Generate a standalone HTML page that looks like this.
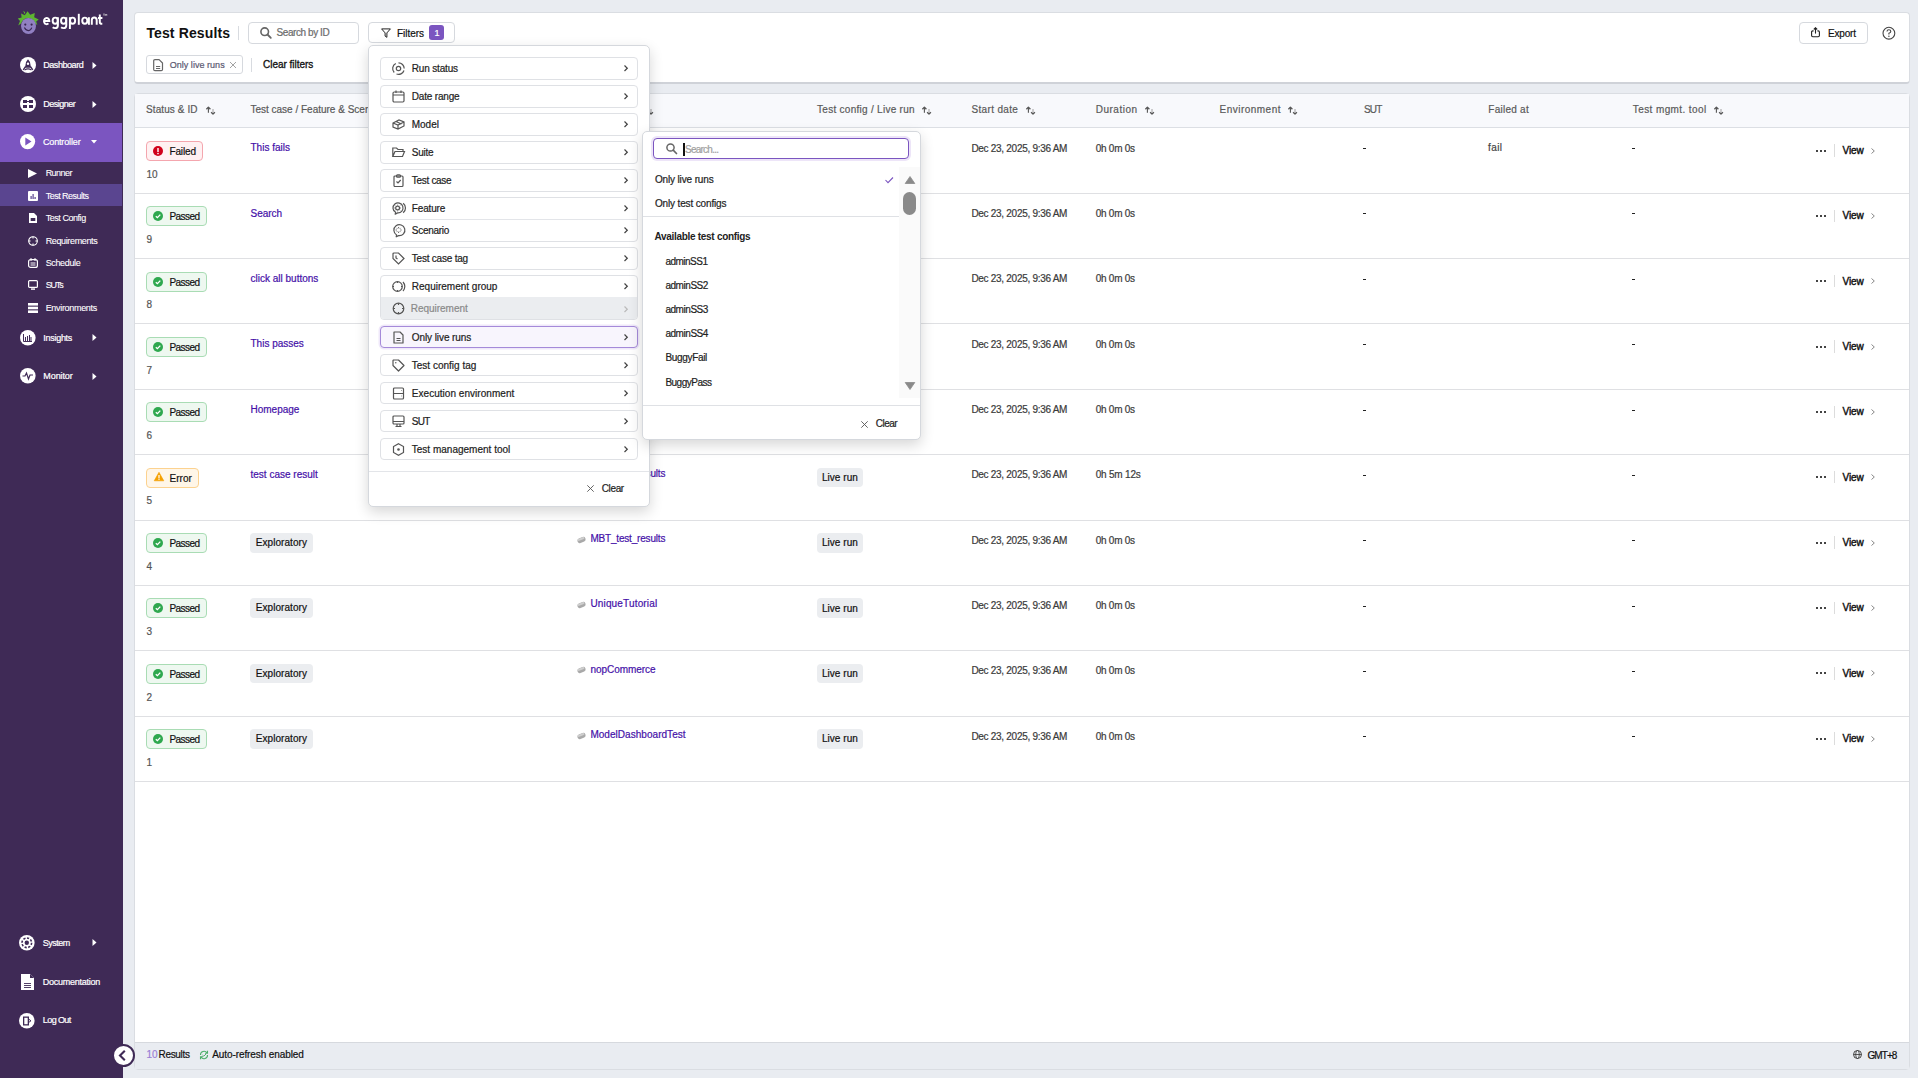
<!DOCTYPE html><html><head><meta charset="utf-8"><style>
html,body{margin:0;padding:0}
body{width:1918px;height:1078px;position:relative;overflow:hidden;background:#e9ecf1;font-family:"Liberation Sans",sans-serif}
.t{position:absolute;white-space:nowrap;line-height:1;-webkit-text-stroke:0.2px currentColor}
svg{overflow:visible}
</style></head><body>
<div style="position:absolute;left:0px;top:0px;width:123px;height:1078px;background:#3f2a56"></div>
<div style="position:absolute;left:0px;top:123px;width:122px;height:39px;background:#7b55c0"></div>
<div style="position:absolute;left:0px;top:184px;width:122px;height:22px;background:#5a4590"></div>
<svg style="position:absolute;left:14px;top:6px;" width="30" height="30" viewBox="0 0 30 30"><path d="M4.2 19.5 L6 15 L3.8 12.5 L7.6 11.6 L7.1 7.4 L10.8 9.2 L13.6 5.2 L16.2 8.8 L20.8 7.1 L20.2 11.2 L24.7 13.6 L22.2 15.6 L23.4 19.2 L21.4 17.4 Q19 12.2 14.2 12.1 Q9.2 12.2 7 17.4 Z" fill="#5db531"/>
<path d="M9.2 4.8 L11.2 6.2 L10.6 8.2 Z" fill="#5db531"/>
<ellipse cx="14.5" cy="20" rx="7.5" ry="8" fill="#9180c2"/>
<circle cx="11.3" cy="18.6" r="1.1" fill="#3a2653"/><circle cx="17.6" cy="18.6" r="1.1" fill="#3a2653"/>
<path d="M10.4 21.6 Q11.8 24.6 14.2 24.6 Q16.6 24.6 17.8 21.6" stroke="#3a2653" stroke-width="1.1" fill="none"/></svg>
<svg style="position:absolute;left:0px;top:0px;" width="110" height="34" viewBox="0 0 110 34"><g stroke="#fff" stroke-width="1.95" fill="none" stroke-linecap="butt">
<path d="M44 20.9 H49.3 A2.65 3.1 0 1 0 48.4 23.4"/>
<ellipse cx="55.2" cy="20.7" rx="2.55" ry="3.1"/><path d="M57.9 17.2 V25.2 Q57.9 28.1 55.1 28.1 Q53.6 28.1 52.7 27.3"/>
<ellipse cx="63.6" cy="20.7" rx="2.55" ry="3.1"/><path d="M66.3 17.2 V25.2 Q66.3 28.1 63.5 28.1 Q62 28.1 61.1 27.3"/>
<ellipse cx="72.6" cy="20.7" rx="2.55" ry="3.1"/><path d="M69.9 17.2 V29"/>
<path d="M78.8 13.8 V24.8"/>
<ellipse cx="84.8" cy="20.7" rx="2.55" ry="3.1"/><path d="M88.9 17.2 V24.8"/>
<path d="M91.8 24.8 V20.2 Q91.8 17.5 94.3 17.5 Q96.7 17.5 96.7 20.2 V24.8"/>
<path d="M99.8 14.6 V22.2 Q99.8 23.8 102.3 23.8 M98 18 H102.4"/>
</g>
<path d="M103 14 H105 M104 14 V16 M105.4 16 V14 L106.1 15.2 L106.8 14 V16" stroke="#ddd" stroke-width="0.5" fill="none"/></svg>
<svg style="position:absolute;left:20px;top:57px;" width="16" height="16" viewBox="0 0 16 16"><circle cx="8" cy="8" r="8" fill="#fff"/><path d="M8 2.2 Q10.6 4.6 10.6 8.4 L11 10.8 H5 L5.4 8.4 Q5.4 4.6 8 2.2 Z" fill="#3f2a56"/><circle cx="8" cy="6.8" r="1.2" fill="#fff"/><path d="M5.6 9.5 L3.2 12.8 M10.4 9.5 L12.8 12.8" stroke="#3f2a56" stroke-width="1.3"/><path d="M4.5 13 Q8 10.8 11.5 13" stroke="#3f2a56" stroke-width="1.1" fill="none"/></svg>
<div class="t" style="left:43.20px;top:60.88px;font-size:9px;color:#fff;letter-spacing:-0.439px;">Dashboard</div>
<svg style="position:absolute;left:92px;top:62px;" width="5" height="7" viewBox="0 0 5 7"><path d="M0.5 0 L4.5 3.5 L0.5 7 Z" fill="#fff"/></svg>
<svg style="position:absolute;left:20px;top:96px;" width="16" height="16" viewBox="0 0 16 16"><circle cx="8" cy="8" r="8" fill="#fff"/><rect x="3" y="4" width="4" height="3" fill="#3f2a56"/><rect x="9" y="4" width="4" height="3" fill="#3f2a56"/><rect x="3" y="9" width="4" height="3" fill="#3f2a56"/><rect x="9" y="9" width="4" height="3" fill="#3f2a56"/><rect x="6.5" y="5" width="3" height="1" fill="#3f2a56"/></svg>
<div class="t" style="left:43.20px;top:99.98px;font-size:9px;color:#fff;letter-spacing:-0.500px;">Designer</div>
<svg style="position:absolute;left:92px;top:101px;" width="5" height="7" viewBox="0 0 5 7"><path d="M0.5 0 L4.5 3.5 L0.5 7 Z" fill="#fff"/></svg>
<svg style="position:absolute;left:20px;top:134px;" width="15.2" height="15.2" viewBox="0 0 15.2 15.2"><circle cx="7.6" cy="7.6" r="7.6" fill="#fff"/><path d="M5.3 3.6 L11.5 7.6 L5.3 11.6 Z" fill="#7b55c0"/></svg>
<div class="t" style="left:42.90px;top:137.88px;font-size:9px;color:#fff;letter-spacing:-0.135px;">Controller</div>
<svg style="position:absolute;left:91px;top:140px;" width="6" height="4" viewBox="0 0 6 4"><path d="M0 0 L6 0 L3 3.5 Z" fill="#fff"/></svg>
<svg style="position:absolute;left:28px;top:169px;" width="9" height="9" viewBox="0 0 9 9"><path d="M0 0 L9 4.5 L0 9 Z" fill="#fff"/></svg>
<div class="t" style="left:45.70px;top:169.18px;font-size:9px;color:#fff;letter-spacing:-0.564px;-webkit-text-stroke:0.1px #fff">Runner</div>
<svg style="position:absolute;left:28px;top:191px;" width="10" height="10" viewBox="0 0 10 10"><rect x="0" y="0" width="10" height="10" rx="1" fill="#fff"/><rect x="2.5" y="5" width="1.2" height="3" fill="#5a4590"/><rect x="4.5" y="3" width="1.2" height="5" fill="#5a4590"/><rect x="6.5" y="6" width="1.2" height="2" fill="#5a4590"/></svg>
<div class="t" style="left:45.70px;top:192.18px;font-size:9px;color:#fff;letter-spacing:-0.519px;-webkit-text-stroke:0.1px #fff">Test Results</div>
<svg style="position:absolute;left:29px;top:213px;" width="8" height="10" viewBox="0 0 8 10"><path d="M0 0 L5 0 L8 3 L8 10 L0 10 Z" fill="#fff"/><rect x="1.7" y="5" width="4.6" height="3" fill="#3f2a56"/></svg>
<div class="t" style="left:45.70px;top:214.48px;font-size:9px;color:#fff;letter-spacing:-0.455px;-webkit-text-stroke:0.1px #fff">Test Config</div>
<svg style="position:absolute;left:28px;top:236px;" width="10" height="10" viewBox="0 0 10 10"><circle cx="5" cy="5" r="4.3" stroke="#fff" stroke-width="1.1" fill="none"/><path d="M5 0.5 V2.6 M5 7.4 V9.5 M0.5 5 H2.6 M7.4 5 H9.5" stroke="#fff" stroke-width="1.1"/></svg>
<div class="t" style="left:45.70px;top:236.88px;font-size:9px;color:#fff;letter-spacing:-0.366px;-webkit-text-stroke:0.1px #fff">Requirements</div>
<svg style="position:absolute;left:28px;top:258px;" width="10" height="10" viewBox="0 0 10 10"><rect x="0.6" y="1.6" width="8.8" height="7.8" rx="2" stroke="#fff" stroke-width="1.2" fill="none"/><path d="M3 0 V3 M7 0 V3 M2.5 5 H7.5 M2.5 7 H7.5" stroke="#fff" stroke-width="1"/></svg>
<div class="t" style="left:45.70px;top:259.18px;font-size:9px;color:#fff;letter-spacing:-0.361px;-webkit-text-stroke:0.1px #fff">Schedule</div>
<svg style="position:absolute;left:28px;top:280px;" width="10" height="10" viewBox="0 0 10 10"><rect x="0.6" y="0.6" width="8.8" height="6.8" rx="1" stroke="#fff" stroke-width="1.2" fill="none"/><rect x="3" y="8.4" width="4" height="1.4" fill="#fff"/></svg>
<div class="t" style="left:45.70px;top:281.48px;font-size:9px;color:#fff;letter-spacing:-1.170px;-webkit-text-stroke:0.1px #fff">SUTs</div>
<svg style="position:absolute;left:28px;top:303px;" width="10" height="10" viewBox="0 0 10 10"><rect x="0" y="0" width="10" height="2.6" fill="#fff"/><rect x="0" y="3.7" width="10" height="2.6" fill="#fff"/><rect x="0" y="7.4" width="10" height="2.6" fill="#fff"/></svg>
<div class="t" style="left:45.70px;top:304.18px;font-size:9px;color:#fff;letter-spacing:-0.321px;-webkit-text-stroke:0.1px #fff">Environments</div>
<svg style="position:absolute;left:20px;top:330px;" width="15.6" height="15.6" viewBox="0 0 15.6 15.6"><circle cx="7.8" cy="7.8" r="7.8" fill="#fff"/><path d="M3.5 4 V11.5 H12 M5.5 11 V7 M7.5 11 V6 M9.5 11 V5 M11 11 V7" stroke="#3f2a56" stroke-width="1" fill="none"/></svg>
<div class="t" style="left:43.30px;top:333.68px;font-size:9px;color:#fff;letter-spacing:-0.286px;">Insights</div>
<svg style="position:absolute;left:92px;top:334px;" width="5" height="7" viewBox="0 0 5 7"><path d="M0.5 0 L4.5 3.5 L0.5 7 Z" fill="#fff"/></svg>
<svg style="position:absolute;left:20px;top:368px;" width="15.6" height="15.6" viewBox="0 0 15.6 15.6"><circle cx="7.8" cy="7.8" r="7.8" fill="#fff"/><path d="M2.5 8 H5 L6.5 5 L8.5 11 L10 7 H13" stroke="#3f2a56" stroke-width="1.2" fill="none"/></svg>
<div class="t" style="left:43.30px;top:372.18px;font-size:9px;color:#fff;letter-spacing:-0.086px;">Monitor</div>
<svg style="position:absolute;left:92px;top:373px;" width="5" height="7" viewBox="0 0 5 7"><path d="M0.5 0 L4.5 3.5 L0.5 7 Z" fill="#fff"/></svg>
<svg style="position:absolute;left:19px;top:935px;" width="15.6" height="15.6" viewBox="0 0 15.6 15.6"><circle cx="7.8" cy="7.8" r="7.8" fill="#fff"/><circle cx="7.8" cy="7.8" r="2.2" fill="#3f2a56"/><circle cx="7.8" cy="7.8" r="4.8" stroke="#3f2a56" stroke-width="1.6" fill="none" stroke-dasharray="2.2 1.5"/></svg>
<div class="t" style="left:42.80px;top:938.98px;font-size:9px;color:#fff;letter-spacing:-0.503px;">System</div>
<svg style="position:absolute;left:92px;top:939px;" width="5" height="7" viewBox="0 0 5 7"><path d="M0.5 0 L4.5 3.5 L0.5 7 Z" fill="#fff"/></svg>
<svg style="position:absolute;left:21px;top:974px;" width="13" height="16" viewBox="0 0 13 16"><path d="M0 0 L9 0 L13 4 L13 16 L0 16 Z" fill="#fff"/><path d="M9 0 V4 H13" fill="#3f2a56"/><path d="M3 9.5 H10 M3 11.5 H10 M3 13.5 H10" stroke="#3f2a56" stroke-width="0.9"/></svg>
<div class="t" style="left:42.80px;top:978.18px;font-size:9px;color:#fff;letter-spacing:-0.260px;">Documentation</div>
<svg style="position:absolute;left:19px;top:1013px;" width="15.6" height="15.6" viewBox="0 0 15.6 15.6"><circle cx="7.8" cy="7.8" r="7.8" fill="#fff"/><rect x="4" y="3.5" width="6" height="9" fill="#3f2a56"/><rect x="5.3" y="4.8" width="3.4" height="6.4" fill="#fff"/><path d="M9.5 6 L12 7.8 L9.5 9.6" stroke="#3f2a56" stroke-width="1" fill="none"/></svg>
<div class="t" style="left:42.80px;top:1016.48px;font-size:9px;color:#fff;letter-spacing:-0.590px;">Log Out</div>
<div style="position:absolute;left:134px;top:12px;width:1776px;height:71.5px;background:#fff;border:1px solid #dadde2;border-bottom:2px solid #cfd2d8;border-radius:4px;box-sizing:border-box"></div>
<div class="t" style="left:146.40px;top:25.95px;font-size:14px;color:#111;font-weight:bold;-webkit-text-stroke:0;letter-spacing:0.129px;">Test Results</div>
<div style="position:absolute;left:238px;top:26px;width:1px;height:14px;background:#d8dbe0"></div>
<div style="position:absolute;left:247.5px;top:22.4px;width:111.10000000000002px;height:21.200000000000003px;border:1px solid #d6d9de;border-radius:4px;box-sizing:border-box;background:#fff"></div>
<svg style="position:absolute;left:260px;top:27px;" width="12" height="12" viewBox="0 0 12 12"><circle cx="4.7" cy="4.7" r="3.8" stroke="#666" stroke-width="1.6" fill="none"/><path d="M7.5 7.5 L10.8 10.8" stroke="#666" stroke-width="1.8" stroke-linecap="round"/></svg>
<div class="t" style="left:276.60px;top:28.14px;font-size:10px;color:#6b6b6b;letter-spacing:-0.436px;">Search by ID</div>
<div style="position:absolute;left:368.3px;top:22.4px;width:87.19999999999999px;height:20.9px;border:1px solid #d6d9de;border-radius:4px;box-sizing:border-box;background:#fff"></div>
<svg style="position:absolute;left:381px;top:28px;" width="10" height="10" viewBox="0 0 10 10"><path d="M0.6 0.9 H9.4 L5.9 4.9 V9.3 L4.1 8.1 V4.9 Z" stroke="#222" stroke-width="1" fill="none" stroke-linejoin="miter"/></svg>
<div class="t" style="left:397.00px;top:29.14px;font-size:10px;color:#111;letter-spacing:-0.033px;">Filters</div>
<div style="position:absolute;left:429px;top:25px;width:15px;height:15px;background:#7b55c0;border-radius:3px"></div>
<div class="t" style="left:434.50px;top:29.18px;font-size:9px;color:#fff;">1</div>
<div style="position:absolute;left:146.3px;top:55px;width:96.29999999999998px;height:18.5px;border:1px solid #d6d9de;border-radius:3px;box-sizing:border-box;background:#fff"></div>
<svg style="position:absolute;left:153px;top:59px;" width="11" height="13" viewBox="0 0 11 13"><path d="M0.7 1.8 Q0.7 0.6 1.9 0.6 H6.1 L9.5 4 V10.4 Q9.5 11.6 8.3 11.6 H1.9 Q0.7 11.6 0.7 10.4 Z" stroke="#666" stroke-width="1.2" fill="none" stroke-linejoin="round"/><path d="M3 7.5 H7.2 M3 9.5 H7.2" stroke="#666" stroke-width="1"/></svg>
<div class="t" style="left:169.70px;top:61.18px;font-size:9px;color:#5a5870;letter-spacing:0.035px;">Only live runs</div>
<svg style="position:absolute;left:230px;top:62px;" width="6" height="6" viewBox="0 0 6 6"><path d="M0 0 L6 6 M6 0 L0 6" stroke="#999" stroke-width="0.9"/></svg>
<div style="position:absolute;left:251px;top:58px;width:1px;height:14px;background:#d8dbe0"></div>
<div class="t" style="left:263.00px;top:60.13px;font-size:10px;color:#111;letter-spacing:-0.029px;-webkit-text-stroke:0.32px #111">Clear filters</div>
<div style="position:absolute;left:1798.5px;top:22.3px;width:69.09999999999991px;height:21.3px;border:1px solid #d6d9de;border-radius:4px;box-sizing:border-box;background:#fff"></div>
<svg style="position:absolute;left:1811px;top:27px;" width="10" height="11" viewBox="0 0 10 11"><path d="M2.6 3.9 H1.8 Q0.6 3.9 0.6 5.1 V8.6 Q0.6 9.8 1.8 9.8 H7.2 Q8.4 9.8 8.4 8.6 V5.1 Q8.4 3.9 7.2 3.9 H6.4" stroke="#222" stroke-width="1.1" fill="none"/><path d="M4.5 6.6 V0.9" stroke="#222" stroke-width="1.1"/><path d="M2.8 2.5 L4.5 0.8 L6.2 2.5" stroke="#222" stroke-width="1.1" fill="none"/></svg>
<div class="t" style="left:1828.00px;top:29.14px;font-size:10px;color:#111;letter-spacing:-0.180px;">Export</div>
<svg style="position:absolute;left:1882px;top:26px;" width="14" height="14" viewBox="0 0 14 14"><circle cx="6.9" cy="7.2" r="5.9" stroke="#444" stroke-width="1.1" fill="none"/><path d="M5 5.6 Q5 3.7 6.9 3.7 Q8.8 3.7 8.8 5.4 Q8.8 6.5 6.9 7.3 V8.5" stroke="#444" stroke-width="1.1" fill="none"/><circle cx="6.9" cy="10.2" r="0.7" fill="#444"/></svg>
<div style="position:absolute;left:134px;top:93px;width:1776px;height:977px;background:#fff;border:1px solid #dadde2;border-radius:4px;box-sizing:border-box;overflow:hidden"></div>
<div style="position:absolute;left:135px;top:94px;width:1774px;height:33px;background:#f8f9fc"></div>
<div style="position:absolute;left:135px;top:127px;width:1774px;height:1px;background:#dcdfe4"></div>
<div style="position:absolute;left:135px;top:1042px;width:1774px;height:27px;background:#e9ecf1;border-top:1px solid #d6d9de;box-sizing:border-box"></div>
<div class="t" style="left:146.40px;top:1049.93px;font-size:10px;color:#9a7fd6;">10</div>
<div class="t" style="left:158.50px;top:1049.93px;font-size:10px;color:#111;letter-spacing:-0.308px;">Results</div>
<svg style="position:absolute;left:199px;top:1050px;" width="10" height="10" viewBox="0 0 10 10"><path d="M1.5 5 A3.5 3.5 0 0 1 8 3 M8.5 5 A3.5 3.5 0 0 1 2 7" stroke="#4caf6a" stroke-width="1.1" fill="none"/><path d="M8.5 0.8 V3.3 H6" stroke="#4caf6a" stroke-width="1.1" fill="none"/><path d="M1.5 9.2 V6.7 H4" stroke="#4caf6a" stroke-width="1.1" fill="none"/><path d="M3.5 5 L4.8 6.2 L7 4" stroke="#4caf6a" stroke-width="1" fill="none"/></svg>
<div class="t" style="left:212.30px;top:1049.93px;font-size:10px;color:#111;letter-spacing:-0.100px;">Auto-refresh enabled</div>
<svg style="position:absolute;left:1853px;top:1050px;" width="9" height="9" viewBox="0 0 9 9"><circle cx="4.5" cy="4.5" r="4" stroke="#333" stroke-width="0.9" fill="none"/><ellipse cx="4.5" cy="4.5" rx="1.8" ry="4" stroke="#333" stroke-width="0.8" fill="none"/><path d="M0.5 4.5 H8.5" stroke="#333" stroke-width="0.8"/></svg>
<div class="t" style="left:1867.40px;top:1051.34px;font-size:10px;color:#111;letter-spacing:-0.900px;">GMT+8</div>
<div class="t" style="left:146.00px;top:105.43px;font-size:10px;color:#5a5a5a;letter-spacing:0.090px;">Status &amp; ID</div>
<svg style="position:absolute;left:206px;top:106px;" width="10" height="9" viewBox="0 0 10 9"><path d="M2.4 1.6 V6.8" stroke="#555" stroke-width="1.1"/><path d="M0.4 3.2 L2.4 1.1 L4.4 3.2" stroke="#555" stroke-width="1.3" fill="none" stroke-linejoin="round"/><path d="M7 2.9 V7.4" stroke="#a8a8a8" stroke-width="1.1"/><path d="M5.1 6.3 L7 8.1 L8.9 6.3" stroke="#555" stroke-width="1.3" fill="none" stroke-linejoin="round"/></svg>
<div class="t" style="left:250.40px;top:105.43px;font-size:10px;color:#5a5a5a;">Test case / Feature &amp; Scenario</div>
<svg style="position:absolute;left:644px;top:106px;" width="10" height="9" viewBox="0 0 10 9"><path d="M2.4 1.6 V6.8" stroke="#555" stroke-width="1.1"/><path d="M0.4 3.2 L2.4 1.1 L4.4 3.2" stroke="#555" stroke-width="1.3" fill="none" stroke-linejoin="round"/><path d="M7 2.9 V7.4" stroke="#a8a8a8" stroke-width="1.1"/><path d="M5.1 6.3 L7 8.1 L8.9 6.3" stroke="#555" stroke-width="1.3" fill="none" stroke-linejoin="round"/></svg>
<div class="t" style="left:817.10px;top:105.43px;font-size:10px;color:#5a5a5a;letter-spacing:0.276px;">Test config / Live run</div>
<svg style="position:absolute;left:922px;top:106px;" width="10" height="9" viewBox="0 0 10 9"><path d="M2.4 1.6 V6.8" stroke="#555" stroke-width="1.1"/><path d="M0.4 3.2 L2.4 1.1 L4.4 3.2" stroke="#555" stroke-width="1.3" fill="none" stroke-linejoin="round"/><path d="M7 2.9 V7.4" stroke="#a8a8a8" stroke-width="1.1"/><path d="M5.1 6.3 L7 8.1 L8.9 6.3" stroke="#555" stroke-width="1.3" fill="none" stroke-linejoin="round"/></svg>
<div class="t" style="left:971.40px;top:105.43px;font-size:10px;color:#5a5a5a;letter-spacing:0.350px;">Start date</div>
<svg style="position:absolute;left:1026px;top:106px;" width="10" height="9" viewBox="0 0 10 9"><path d="M2.4 1.6 V6.8" stroke="#555" stroke-width="1.1"/><path d="M0.4 3.2 L2.4 1.1 L4.4 3.2" stroke="#555" stroke-width="1.3" fill="none" stroke-linejoin="round"/><path d="M7 2.9 V7.4" stroke="#a8a8a8" stroke-width="1.1"/><path d="M5.1 6.3 L7 8.1 L8.9 6.3" stroke="#555" stroke-width="1.3" fill="none" stroke-linejoin="round"/></svg>
<div class="t" style="left:1095.70px;top:105.43px;font-size:10px;color:#5a5a5a;letter-spacing:0.514px;">Duration</div>
<svg style="position:absolute;left:1145px;top:106px;" width="10" height="9" viewBox="0 0 10 9"><path d="M2.4 1.6 V6.8" stroke="#555" stroke-width="1.1"/><path d="M0.4 3.2 L2.4 1.1 L4.4 3.2" stroke="#555" stroke-width="1.3" fill="none" stroke-linejoin="round"/><path d="M7 2.9 V7.4" stroke="#a8a8a8" stroke-width="1.1"/><path d="M5.1 6.3 L7 8.1 L8.9 6.3" stroke="#555" stroke-width="1.3" fill="none" stroke-linejoin="round"/></svg>
<div class="t" style="left:1219.50px;top:105.43px;font-size:10px;color:#5a5a5a;letter-spacing:0.485px;">Environment</div>
<svg style="position:absolute;left:1288px;top:106px;" width="10" height="9" viewBox="0 0 10 9"><path d="M2.4 1.6 V6.8" stroke="#555" stroke-width="1.1"/><path d="M0.4 3.2 L2.4 1.1 L4.4 3.2" stroke="#555" stroke-width="1.3" fill="none" stroke-linejoin="round"/><path d="M7 2.9 V7.4" stroke="#a8a8a8" stroke-width="1.1"/><path d="M5.1 6.3 L7 8.1 L8.9 6.3" stroke="#555" stroke-width="1.3" fill="none" stroke-linejoin="round"/></svg>
<div class="t" style="left:1364.00px;top:105.43px;font-size:10px;color:#5a5a5a;letter-spacing:-0.850px;">SUT</div>
<div class="t" style="left:1488.30px;top:105.43px;font-size:10px;color:#5a5a5a;letter-spacing:0.256px;">Failed at</div>
<div class="t" style="left:1632.80px;top:105.43px;font-size:10px;color:#5a5a5a;letter-spacing:0.400px;">Test mgmt. tool</div>
<svg style="position:absolute;left:1714px;top:106px;" width="10" height="9" viewBox="0 0 10 9"><path d="M2.4 1.6 V6.8" stroke="#555" stroke-width="1.1"/><path d="M0.4 3.2 L2.4 1.1 L4.4 3.2" stroke="#555" stroke-width="1.3" fill="none" stroke-linejoin="round"/><path d="M7 2.9 V7.4" stroke="#a8a8a8" stroke-width="1.1"/><path d="M5.1 6.3 L7 8.1 L8.9 6.3" stroke="#555" stroke-width="1.3" fill="none" stroke-linejoin="round"/></svg>
<div style="position:absolute;left:135px;top:193px;width:1774px;height:1px;background:#dfe0e3"></div>
<div style="position:absolute;left:146px;top:140.8px;width:56.80000000000001px;height:20.0px;background:#fff1f2;border:1px solid #f4a6ae;border-radius:4px;box-sizing:border-box"></div>
<svg style="position:absolute;left:153px;top:146px;" width="10" height="10" viewBox="0 0 10 10"><circle cx="5" cy="5" r="5" fill="#d0021b"/><rect x="4.3" y="2" width="1.4" height="4" fill="#fff"/><circle cx="5" cy="7.6" r="0.8" fill="#fff"/></svg>
<div class="t" style="left:169.50px;top:146.94px;font-size:10px;color:#111;letter-spacing:-0.150px;">Failed</div>
<div class="t" style="left:146.50px;top:169.73px;font-size:10px;color:#555;">10</div>
<div class="t" style="left:250.50px;top:143.44px;font-size:10px;color:#4510a8;">This fails</div>
<div class="t" style="left:971.40px;top:143.53px;font-size:10px;color:#3a3a3a;letter-spacing:-0.287px;">Dec 23, 2025, 9:36 AM</div>
<div class="t" style="left:1095.70px;top:143.53px;font-size:10px;color:#3a3a3a;letter-spacing:-0.250px;">0h 0m 0s</div>
<div style="position:absolute;left:1363px;top:148px;width:3px;height:1px;background:#222"></div>
<div class="t" style="left:1488.00px;top:143.03px;font-size:10px;color:#444;letter-spacing:0.400px;">fail</div>
<div style="position:absolute;left:1632px;top:148px;width:3px;height:1px;background:#222"></div>
<div style="position:absolute;left:1815.8px;top:149.5px;width:2.1000000000001364px;height:2.0px;background:#444"></div>
<div style="position:absolute;left:1820.1px;top:149.5px;width:2.1000000000001364px;height:2.0px;background:#444"></div>
<div style="position:absolute;left:1824.3999999999999px;top:149.5px;width:2.1000000000001364px;height:2.0px;background:#444"></div>
<div style="position:absolute;left:1834px;top:144.2px;width:1px;height:12.5px;background:#dcdcdc"></div>
<div class="t" style="left:1842.50px;top:145.94px;font-size:10px;color:#111;letter-spacing:-0.067px;-webkit-text-stroke:0.4px #111">View</div>
<svg style="position:absolute;left:1871px;top:148px;" width="4" height="6" viewBox="0 0 4 6"><path d="M0.5 0.5 L3.3 3 L0.5 5.5" stroke="#888" stroke-width="1" fill="none"/></svg>
<div style="position:absolute;left:135px;top:258px;width:1774px;height:1px;background:#dfe0e3"></div>
<div style="position:absolute;left:146px;top:206.15px;width:60.80000000000001px;height:20.0px;background:#eef8f0;border:1px solid #a9dcb4;border-radius:4px;box-sizing:border-box"></div>
<svg style="position:absolute;left:153px;top:211px;" width="10" height="10" viewBox="0 0 10 10"><circle cx="5" cy="5" r="5" fill="#2fa84f"/><path d="M2.8 5.2 L4.4 6.7 L7.3 3.6" stroke="#fff" stroke-width="1.3" fill="none"/></svg>
<div class="t" style="left:169.50px;top:212.28px;font-size:10px;color:#111;letter-spacing:-0.570px;">Passed</div>
<div class="t" style="left:146.50px;top:235.08px;font-size:10px;color:#555;">9</div>
<div class="t" style="left:250.50px;top:208.78px;font-size:10px;color:#4510a8;">Search</div>
<div class="t" style="left:971.40px;top:208.88px;font-size:10px;color:#3a3a3a;letter-spacing:-0.287px;">Dec 23, 2025, 9:36 AM</div>
<div class="t" style="left:1095.70px;top:208.88px;font-size:10px;color:#3a3a3a;letter-spacing:-0.250px;">0h 0m 0s</div>
<div style="position:absolute;left:1363px;top:213px;width:3px;height:1px;background:#222"></div>
<div style="position:absolute;left:1632px;top:213px;width:3px;height:1px;background:#222"></div>
<div style="position:absolute;left:1815.8px;top:214.85px;width:2.1000000000001364px;height:2.0px;background:#444"></div>
<div style="position:absolute;left:1820.1px;top:214.85px;width:2.1000000000001364px;height:2.0px;background:#444"></div>
<div style="position:absolute;left:1824.3999999999999px;top:214.85px;width:2.1000000000001364px;height:2.0px;background:#444"></div>
<div style="position:absolute;left:1834px;top:209.54999999999998px;width:1px;height:12.5px;background:#dcdcdc"></div>
<div class="t" style="left:1842.50px;top:211.28px;font-size:10px;color:#111;letter-spacing:-0.067px;-webkit-text-stroke:0.4px #111">View</div>
<svg style="position:absolute;left:1871px;top:213px;" width="4" height="6" viewBox="0 0 4 6"><path d="M0.5 0.5 L3.3 3 L0.5 5.5" stroke="#888" stroke-width="1" fill="none"/></svg>
<div style="position:absolute;left:135px;top:323px;width:1774px;height:1px;background:#dfe0e3"></div>
<div style="position:absolute;left:146px;top:271.5px;width:60.80000000000001px;height:20.0px;background:#eef8f0;border:1px solid #a9dcb4;border-radius:4px;box-sizing:border-box"></div>
<svg style="position:absolute;left:153px;top:277px;" width="10" height="10" viewBox="0 0 10 10"><circle cx="5" cy="5" r="5" fill="#2fa84f"/><path d="M2.8 5.2 L4.4 6.7 L7.3 3.6" stroke="#fff" stroke-width="1.3" fill="none"/></svg>
<div class="t" style="left:169.50px;top:277.64px;font-size:10px;color:#111;letter-spacing:-0.570px;">Passed</div>
<div class="t" style="left:146.50px;top:300.44px;font-size:10px;color:#555;">8</div>
<div class="t" style="left:250.50px;top:274.14px;font-size:10px;color:#4510a8;">click all buttons</div>
<div class="t" style="left:971.40px;top:274.24px;font-size:10px;color:#3a3a3a;letter-spacing:-0.287px;">Dec 23, 2025, 9:36 AM</div>
<div class="t" style="left:1095.70px;top:274.24px;font-size:10px;color:#3a3a3a;letter-spacing:-0.250px;">0h 0m 0s</div>
<div style="position:absolute;left:1363px;top:279px;width:3px;height:1px;background:#222"></div>
<div style="position:absolute;left:1632px;top:279px;width:3px;height:1px;background:#222"></div>
<div style="position:absolute;left:1815.8px;top:280.2px;width:2.1000000000001364px;height:2.0px;background:#444"></div>
<div style="position:absolute;left:1820.1px;top:280.2px;width:2.1000000000001364px;height:2.0px;background:#444"></div>
<div style="position:absolute;left:1824.3999999999999px;top:280.2px;width:2.1000000000001364px;height:2.0px;background:#444"></div>
<div style="position:absolute;left:1834px;top:274.9px;width:1px;height:12.5px;background:#dcdcdc"></div>
<div class="t" style="left:1842.50px;top:276.64px;font-size:10px;color:#111;letter-spacing:-0.067px;-webkit-text-stroke:0.4px #111">View</div>
<svg style="position:absolute;left:1871px;top:278px;" width="4" height="6" viewBox="0 0 4 6"><path d="M0.5 0.5 L3.3 3 L0.5 5.5" stroke="#888" stroke-width="1" fill="none"/></svg>
<div style="position:absolute;left:135px;top:389px;width:1774px;height:1px;background:#dfe0e3"></div>
<div style="position:absolute;left:146px;top:336.84999999999997px;width:60.80000000000001px;height:20.0px;background:#eef8f0;border:1px solid #a9dcb4;border-radius:4px;box-sizing:border-box"></div>
<svg style="position:absolute;left:153px;top:342px;" width="10" height="10" viewBox="0 0 10 10"><circle cx="5" cy="5" r="5" fill="#2fa84f"/><path d="M2.8 5.2 L4.4 6.7 L7.3 3.6" stroke="#fff" stroke-width="1.3" fill="none"/></svg>
<div class="t" style="left:169.50px;top:342.99px;font-size:10px;color:#111;letter-spacing:-0.570px;">Passed</div>
<div class="t" style="left:146.50px;top:365.79px;font-size:10px;color:#555;">7</div>
<div class="t" style="left:250.50px;top:339.49px;font-size:10px;color:#4510a8;">This passes</div>
<div class="t" style="left:971.40px;top:339.58px;font-size:10px;color:#3a3a3a;letter-spacing:-0.287px;">Dec 23, 2025, 9:36 AM</div>
<div class="t" style="left:1095.70px;top:339.58px;font-size:10px;color:#3a3a3a;letter-spacing:-0.250px;">0h 0m 0s</div>
<div style="position:absolute;left:1363px;top:344px;width:3px;height:1px;background:#222"></div>
<div style="position:absolute;left:1632px;top:344px;width:3px;height:1px;background:#222"></div>
<div style="position:absolute;left:1815.8px;top:345.54999999999995px;width:2.1000000000001364px;height:2.0px;background:#444"></div>
<div style="position:absolute;left:1820.1px;top:345.54999999999995px;width:2.1000000000001364px;height:2.0px;background:#444"></div>
<div style="position:absolute;left:1824.3999999999999px;top:345.54999999999995px;width:2.1000000000001364px;height:2.0px;background:#444"></div>
<div style="position:absolute;left:1834px;top:340.24999999999994px;width:1px;height:12.5px;background:#dcdcdc"></div>
<div class="t" style="left:1842.50px;top:341.99px;font-size:10px;color:#111;letter-spacing:-0.067px;-webkit-text-stroke:0.4px #111">View</div>
<svg style="position:absolute;left:1871px;top:344px;" width="4" height="6" viewBox="0 0 4 6"><path d="M0.5 0.5 L3.3 3 L0.5 5.5" stroke="#888" stroke-width="1" fill="none"/></svg>
<div style="position:absolute;left:135px;top:454px;width:1774px;height:1px;background:#dfe0e3"></div>
<div style="position:absolute;left:146px;top:402.2px;width:60.80000000000001px;height:20.0px;background:#eef8f0;border:1px solid #a9dcb4;border-radius:4px;box-sizing:border-box"></div>
<svg style="position:absolute;left:153px;top:407px;" width="10" height="10" viewBox="0 0 10 10"><circle cx="5" cy="5" r="5" fill="#2fa84f"/><path d="M2.8 5.2 L4.4 6.7 L7.3 3.6" stroke="#fff" stroke-width="1.3" fill="none"/></svg>
<div class="t" style="left:169.50px;top:408.34px;font-size:10px;color:#111;letter-spacing:-0.570px;">Passed</div>
<div class="t" style="left:146.50px;top:431.14px;font-size:10px;color:#555;">6</div>
<div class="t" style="left:250.50px;top:404.84px;font-size:10px;color:#4510a8;">Homepage</div>
<div class="t" style="left:971.40px;top:404.94px;font-size:10px;color:#3a3a3a;letter-spacing:-0.287px;">Dec 23, 2025, 9:36 AM</div>
<div class="t" style="left:1095.70px;top:404.94px;font-size:10px;color:#3a3a3a;letter-spacing:-0.250px;">0h 0m 0s</div>
<div style="position:absolute;left:1363px;top:410px;width:3px;height:1px;background:#222"></div>
<div style="position:absolute;left:1632px;top:410px;width:3px;height:1px;background:#222"></div>
<div style="position:absolute;left:1815.8px;top:410.9px;width:2.1000000000001364px;height:2.0px;background:#444"></div>
<div style="position:absolute;left:1820.1px;top:410.9px;width:2.1000000000001364px;height:2.0px;background:#444"></div>
<div style="position:absolute;left:1824.3999999999999px;top:410.9px;width:2.1000000000001364px;height:2.0px;background:#444"></div>
<div style="position:absolute;left:1834px;top:405.59999999999997px;width:1px;height:12.5px;background:#dcdcdc"></div>
<div class="t" style="left:1842.50px;top:407.34px;font-size:10px;color:#111;letter-spacing:-0.067px;-webkit-text-stroke:0.4px #111">View</div>
<svg style="position:absolute;left:1871px;top:409px;" width="4" height="6" viewBox="0 0 4 6"><path d="M0.5 0.5 L3.3 3 L0.5 5.5" stroke="#888" stroke-width="1" fill="none"/></svg>
<div style="position:absolute;left:135px;top:520px;width:1774px;height:1px;background:#dfe0e3"></div>
<div style="position:absolute;left:146px;top:467.55px;width:52.80000000000001px;height:20.0px;background:#fff6e8;border:1px solid #fcd28f;border-radius:4px;box-sizing:border-box"></div>
<svg style="position:absolute;left:154px;top:472px;" width="10" height="9" viewBox="0 0 10 9"><path d="M5 0.3 L9.8 8.8 H0.2 Z" fill="#f5a000" stroke="#f5a000" stroke-width="0.6" stroke-linejoin="round"/><rect x="4.4" y="3" width="1.2" height="3.2" fill="#fff"/><circle cx="5" cy="7.3" r="0.7" fill="#fff"/></svg>
<div class="t" style="left:169.50px;top:473.69px;font-size:10px;color:#111;letter-spacing:0.025px;">Error</div>
<div class="t" style="left:146.50px;top:496.49px;font-size:10px;color:#555;">5</div>
<div class="t" style="left:250.50px;top:470.19px;font-size:10px;color:#4510a8;">test case result</div>
<svg style="position:absolute;left:577px;top:470px;" width="9" height="8" viewBox="0 0 9 8"><g transform="rotate(-22 4.5 4)"><rect x="0.3" y="1.6" width="8.4" height="4.8" rx="2.2" fill="#a9a9a9"/><rect x="1" y="1.9" width="7" height="2" rx="1" fill="#cfcfcf"/></g></svg>
<div class="t" style="left:590.40px;top:468.79px;font-size:10px;color:#4510a8;letter-spacing:-0.187px;">MBT_test_results</div>
<div style="position:absolute;left:817.2px;top:467.55px;width:45.59999999999991px;height:19.80000000000001px;background:#ebedf0;border-radius:4px"></div>
<div class="t" style="left:821.90px;top:472.89px;font-size:10px;color:#111;letter-spacing:0.057px;">Live run</div>
<div class="t" style="left:971.40px;top:470.29px;font-size:10px;color:#3a3a3a;letter-spacing:-0.287px;">Dec 23, 2025, 9:36 AM</div>
<div class="t" style="left:1095.70px;top:470.29px;font-size:10px;color:#3a3a3a;letter-spacing:-0.200px;">0h 5m 12s</div>
<div style="position:absolute;left:1363px;top:475px;width:3px;height:1px;background:#222"></div>
<div style="position:absolute;left:1632px;top:475px;width:3px;height:1px;background:#222"></div>
<div style="position:absolute;left:1815.8px;top:476.25px;width:2.1000000000001364px;height:2.0px;background:#444"></div>
<div style="position:absolute;left:1820.1px;top:476.25px;width:2.1000000000001364px;height:2.0px;background:#444"></div>
<div style="position:absolute;left:1824.3999999999999px;top:476.25px;width:2.1000000000001364px;height:2.0px;background:#444"></div>
<div style="position:absolute;left:1834px;top:470.95px;width:1px;height:12.5px;background:#dcdcdc"></div>
<div class="t" style="left:1842.50px;top:472.69px;font-size:10px;color:#111;letter-spacing:-0.067px;-webkit-text-stroke:0.4px #111">View</div>
<svg style="position:absolute;left:1871px;top:474px;" width="4" height="6" viewBox="0 0 4 6"><path d="M0.5 0.5 L3.3 3 L0.5 5.5" stroke="#888" stroke-width="1" fill="none"/></svg>
<div style="position:absolute;left:135px;top:585px;width:1774px;height:1px;background:#dfe0e3"></div>
<div style="position:absolute;left:146px;top:532.8999999999999px;width:60.80000000000001px;height:20.0px;background:#eef8f0;border:1px solid #a9dcb4;border-radius:4px;box-sizing:border-box"></div>
<svg style="position:absolute;left:153px;top:538px;" width="10" height="10" viewBox="0 0 10 10"><circle cx="5" cy="5" r="5" fill="#2fa84f"/><path d="M2.8 5.2 L4.4 6.7 L7.3 3.6" stroke="#fff" stroke-width="1.3" fill="none"/></svg>
<div class="t" style="left:169.50px;top:539.03px;font-size:10px;color:#111;letter-spacing:-0.570px;">Passed</div>
<div class="t" style="left:146.50px;top:561.83px;font-size:10px;color:#555;">4</div>
<div style="position:absolute;left:250.2px;top:532.8999999999999px;width:62.5px;height:19.700000000000045px;background:#ebedf0;border-radius:4px"></div>
<div class="t" style="left:255.70px;top:538.13px;font-size:10px;color:#111;letter-spacing:0.070px;">Exploratory</div>
<svg style="position:absolute;left:577px;top:536px;" width="9" height="8" viewBox="0 0 9 8"><g transform="rotate(-22 4.5 4)"><rect x="0.3" y="1.6" width="8.4" height="4.8" rx="2.2" fill="#a9a9a9"/><rect x="1" y="1.9" width="7" height="2" rx="1" fill="#cfcfcf"/></g></svg>
<div class="t" style="left:590.40px;top:534.13px;font-size:10px;color:#4510a8;letter-spacing:-0.187px;">MBT_test_results</div>
<div style="position:absolute;left:817.2px;top:532.8999999999999px;width:45.59999999999991px;height:19.800000000000068px;background:#ebedf0;border-radius:4px"></div>
<div class="t" style="left:821.90px;top:538.23px;font-size:10px;color:#111;letter-spacing:0.057px;">Live run</div>
<div class="t" style="left:971.40px;top:535.63px;font-size:10px;color:#3a3a3a;letter-spacing:-0.287px;">Dec 23, 2025, 9:36 AM</div>
<div class="t" style="left:1095.70px;top:535.63px;font-size:10px;color:#3a3a3a;letter-spacing:-0.250px;">0h 0m 0s</div>
<div style="position:absolute;left:1363px;top:540px;width:3px;height:1px;background:#222"></div>
<div style="position:absolute;left:1632px;top:540px;width:3px;height:1px;background:#222"></div>
<div style="position:absolute;left:1815.8px;top:541.5999999999999px;width:2.1000000000001364px;height:2.0px;background:#444"></div>
<div style="position:absolute;left:1820.1px;top:541.5999999999999px;width:2.1000000000001364px;height:2.0px;background:#444"></div>
<div style="position:absolute;left:1824.3999999999999px;top:541.5999999999999px;width:2.1000000000001364px;height:2.0px;background:#444"></div>
<div style="position:absolute;left:1834px;top:536.3px;width:1px;height:12.5px;background:#dcdcdc"></div>
<div class="t" style="left:1842.50px;top:538.03px;font-size:10px;color:#111;letter-spacing:-0.067px;-webkit-text-stroke:0.4px #111">View</div>
<svg style="position:absolute;left:1871px;top:540px;" width="4" height="6" viewBox="0 0 4 6"><path d="M0.5 0.5 L3.3 3 L0.5 5.5" stroke="#888" stroke-width="1" fill="none"/></svg>
<div style="position:absolute;left:135px;top:650px;width:1774px;height:1px;background:#dfe0e3"></div>
<div style="position:absolute;left:146px;top:598.2499999999999px;width:60.80000000000001px;height:20.0px;background:#eef8f0;border:1px solid #a9dcb4;border-radius:4px;box-sizing:border-box"></div>
<svg style="position:absolute;left:153px;top:603px;" width="10" height="10" viewBox="0 0 10 10"><circle cx="5" cy="5" r="5" fill="#2fa84f"/><path d="M2.8 5.2 L4.4 6.7 L7.3 3.6" stroke="#fff" stroke-width="1.3" fill="none"/></svg>
<div class="t" style="left:169.50px;top:604.38px;font-size:10px;color:#111;letter-spacing:-0.570px;">Passed</div>
<div class="t" style="left:146.50px;top:627.18px;font-size:10px;color:#555;">3</div>
<div style="position:absolute;left:250.2px;top:598.2499999999999px;width:62.5px;height:19.700000000000045px;background:#ebedf0;border-radius:4px"></div>
<div class="t" style="left:255.70px;top:603.48px;font-size:10px;color:#111;letter-spacing:0.070px;">Exploratory</div>
<svg style="position:absolute;left:577px;top:601px;" width="9" height="8" viewBox="0 0 9 8"><g transform="rotate(-22 4.5 4)"><rect x="0.3" y="1.6" width="8.4" height="4.8" rx="2.2" fill="#a9a9a9"/><rect x="1" y="1.9" width="7" height="2" rx="1" fill="#cfcfcf"/></g></svg>
<div class="t" style="left:590.40px;top:599.48px;font-size:10px;color:#4510a8;letter-spacing:0.165px;">UniqueTutorial</div>
<div style="position:absolute;left:817.2px;top:598.2499999999999px;width:45.59999999999991px;height:19.800000000000068px;background:#ebedf0;border-radius:4px"></div>
<div class="t" style="left:821.90px;top:603.58px;font-size:10px;color:#111;letter-spacing:0.057px;">Live run</div>
<div class="t" style="left:971.40px;top:600.98px;font-size:10px;color:#3a3a3a;letter-spacing:-0.287px;">Dec 23, 2025, 9:36 AM</div>
<div class="t" style="left:1095.70px;top:600.98px;font-size:10px;color:#3a3a3a;letter-spacing:-0.250px;">0h 0m 0s</div>
<div style="position:absolute;left:1363px;top:606px;width:3px;height:1px;background:#222"></div>
<div style="position:absolute;left:1632px;top:606px;width:3px;height:1px;background:#222"></div>
<div style="position:absolute;left:1815.8px;top:606.9499999999999px;width:2.1000000000001364px;height:2.0px;background:#444"></div>
<div style="position:absolute;left:1820.1px;top:606.9499999999999px;width:2.1000000000001364px;height:2.0px;background:#444"></div>
<div style="position:absolute;left:1824.3999999999999px;top:606.9499999999999px;width:2.1000000000001364px;height:2.0px;background:#444"></div>
<div style="position:absolute;left:1834px;top:601.65px;width:1px;height:12.5px;background:#dcdcdc"></div>
<div class="t" style="left:1842.50px;top:603.38px;font-size:10px;color:#111;letter-spacing:-0.067px;-webkit-text-stroke:0.4px #111">View</div>
<svg style="position:absolute;left:1871px;top:605px;" width="4" height="6" viewBox="0 0 4 6"><path d="M0.5 0.5 L3.3 3 L0.5 5.5" stroke="#888" stroke-width="1" fill="none"/></svg>
<div style="position:absolute;left:135px;top:716px;width:1774px;height:1px;background:#dfe0e3"></div>
<div style="position:absolute;left:146px;top:663.5999999999999px;width:60.80000000000001px;height:20.0px;background:#eef8f0;border:1px solid #a9dcb4;border-radius:4px;box-sizing:border-box"></div>
<svg style="position:absolute;left:153px;top:669px;" width="10" height="10" viewBox="0 0 10 10"><circle cx="5" cy="5" r="5" fill="#2fa84f"/><path d="M2.8 5.2 L4.4 6.7 L7.3 3.6" stroke="#fff" stroke-width="1.3" fill="none"/></svg>
<div class="t" style="left:169.50px;top:669.73px;font-size:10px;color:#111;letter-spacing:-0.570px;">Passed</div>
<div class="t" style="left:146.50px;top:692.53px;font-size:10px;color:#555;">2</div>
<div style="position:absolute;left:250.2px;top:663.5999999999999px;width:62.5px;height:19.700000000000045px;background:#ebedf0;border-radius:4px"></div>
<div class="t" style="left:255.70px;top:668.83px;font-size:10px;color:#111;letter-spacing:0.070px;">Exploratory</div>
<svg style="position:absolute;left:577px;top:666px;" width="9" height="8" viewBox="0 0 9 8"><g transform="rotate(-22 4.5 4)"><rect x="0.3" y="1.6" width="8.4" height="4.8" rx="2.2" fill="#a9a9a9"/><rect x="1" y="1.9" width="7" height="2" rx="1" fill="#cfcfcf"/></g></svg>
<div class="t" style="left:590.40px;top:664.83px;font-size:10px;color:#4510a8;letter-spacing:-0.040px;">nopCommerce</div>
<div style="position:absolute;left:817.2px;top:663.5999999999999px;width:45.59999999999991px;height:19.800000000000068px;background:#ebedf0;border-radius:4px"></div>
<div class="t" style="left:821.90px;top:668.93px;font-size:10px;color:#111;letter-spacing:0.057px;">Live run</div>
<div class="t" style="left:971.40px;top:666.33px;font-size:10px;color:#3a3a3a;letter-spacing:-0.287px;">Dec 23, 2025, 9:36 AM</div>
<div class="t" style="left:1095.70px;top:666.33px;font-size:10px;color:#3a3a3a;letter-spacing:-0.250px;">0h 0m 0s</div>
<div style="position:absolute;left:1363px;top:671px;width:3px;height:1px;background:#222"></div>
<div style="position:absolute;left:1632px;top:671px;width:3px;height:1px;background:#222"></div>
<div style="position:absolute;left:1815.8px;top:672.3px;width:2.1000000000001364px;height:2.0px;background:#444"></div>
<div style="position:absolute;left:1820.1px;top:672.3px;width:2.1000000000001364px;height:2.0px;background:#444"></div>
<div style="position:absolute;left:1824.3999999999999px;top:672.3px;width:2.1000000000001364px;height:2.0px;background:#444"></div>
<div style="position:absolute;left:1834px;top:667.0px;width:1px;height:12.5px;background:#dcdcdc"></div>
<div class="t" style="left:1842.50px;top:668.73px;font-size:10px;color:#111;letter-spacing:-0.067px;-webkit-text-stroke:0.4px #111">View</div>
<svg style="position:absolute;left:1871px;top:670px;" width="4" height="6" viewBox="0 0 4 6"><path d="M0.5 0.5 L3.3 3 L0.5 5.5" stroke="#888" stroke-width="1" fill="none"/></svg>
<div style="position:absolute;left:135px;top:781px;width:1774px;height:1px;background:#dfe0e3"></div>
<div style="position:absolute;left:146px;top:728.9499999999999px;width:60.80000000000001px;height:20.0px;background:#eef8f0;border:1px solid #a9dcb4;border-radius:4px;box-sizing:border-box"></div>
<svg style="position:absolute;left:153px;top:734px;" width="10" height="10" viewBox="0 0 10 10"><circle cx="5" cy="5" r="5" fill="#2fa84f"/><path d="M2.8 5.2 L4.4 6.7 L7.3 3.6" stroke="#fff" stroke-width="1.3" fill="none"/></svg>
<div class="t" style="left:169.50px;top:735.08px;font-size:10px;color:#111;letter-spacing:-0.570px;">Passed</div>
<div class="t" style="left:146.50px;top:757.88px;font-size:10px;color:#555;">1</div>
<div style="position:absolute;left:250.2px;top:728.9499999999999px;width:62.5px;height:19.700000000000045px;background:#ebedf0;border-radius:4px"></div>
<div class="t" style="left:255.70px;top:734.18px;font-size:10px;color:#111;letter-spacing:0.070px;">Exploratory</div>
<svg style="position:absolute;left:577px;top:732px;" width="9" height="8" viewBox="0 0 9 8"><g transform="rotate(-22 4.5 4)"><rect x="0.3" y="1.6" width="8.4" height="4.8" rx="2.2" fill="#a9a9a9"/><rect x="1" y="1.9" width="7" height="2" rx="1" fill="#cfcfcf"/></g></svg>
<div class="t" style="left:590.40px;top:730.18px;font-size:10px;color:#4510a8;letter-spacing:0.041px;">ModelDashboardTest</div>
<div style="position:absolute;left:817.2px;top:728.9499999999999px;width:45.59999999999991px;height:19.800000000000068px;background:#ebedf0;border-radius:4px"></div>
<div class="t" style="left:821.90px;top:734.28px;font-size:10px;color:#111;letter-spacing:0.057px;">Live run</div>
<div class="t" style="left:971.40px;top:731.68px;font-size:10px;color:#3a3a3a;letter-spacing:-0.287px;">Dec 23, 2025, 9:36 AM</div>
<div class="t" style="left:1095.70px;top:731.68px;font-size:10px;color:#3a3a3a;letter-spacing:-0.250px;">0h 0m 0s</div>
<div style="position:absolute;left:1363px;top:736px;width:3px;height:1px;background:#222"></div>
<div style="position:absolute;left:1632px;top:736px;width:3px;height:1px;background:#222"></div>
<div style="position:absolute;left:1815.8px;top:737.65px;width:2.1000000000001364px;height:2.0px;background:#444"></div>
<div style="position:absolute;left:1820.1px;top:737.65px;width:2.1000000000001364px;height:2.0px;background:#444"></div>
<div style="position:absolute;left:1824.3999999999999px;top:737.65px;width:2.1000000000001364px;height:2.0px;background:#444"></div>
<div style="position:absolute;left:1834px;top:732.35px;width:1px;height:12.5px;background:#dcdcdc"></div>
<div class="t" style="left:1842.50px;top:734.08px;font-size:10px;color:#111;letter-spacing:-0.067px;-webkit-text-stroke:0.4px #111">View</div>
<svg style="position:absolute;left:1871px;top:736px;" width="4" height="6" viewBox="0 0 4 6"><path d="M0.5 0.5 L3.3 3 L0.5 5.5" stroke="#888" stroke-width="1" fill="none"/></svg>
<svg style="position:absolute;left:112px;top:1044px;" width="23" height="23" viewBox="0 0 23 23"><circle cx="11.5" cy="11.5" r="10.5" fill="#fff" stroke="#3f2a56" stroke-width="2"/><path d="M12.8 6.8 L8 11.5 L12.8 16.2" stroke="#3f2a56" stroke-width="2.1" fill="none"/></svg>
<div style="position:absolute;left:368px;top:45.4px;width:281.5px;height:461.20000000000005px;background:#fff;border:1px solid #d5d8dd;border-radius:5px;box-sizing:border-box;box-shadow:0 5px 14px rgba(0,0,0,0.16)"></div>
<div style="position:absolute;left:380px;top:57px;width:258px;height:23px;border:1px solid #dfe1e5;border-radius:4px;box-sizing:border-box;background:#fff;"></div>
<svg style="position:absolute;left:392px;top:62px;" width="13" height="13" viewBox="0 0 13 13"><circle cx="6.5" cy="6.5" r="2.2" stroke="#555" stroke-width="1.2" fill="none"/><path d="M6.5 0.8 A5.7 5.7 0 0 1 12.2 6.5 M12 8.5 A5.7 5.7 0 0 1 4.5 12 M2.2 10.5 A5.7 5.7 0 0 1 3.8 1.5" stroke="#555" stroke-width="1.2" fill="none"/></svg>
<div class="t" style="left:411.80px;top:63.53px;font-size:10px;color:#222;letter-spacing:-0.167px;">Run status</div>
<svg style="position:absolute;left:624px;top:65px;" width="4" height="6.5" viewBox="0 0 4 6.5"><path d="M0.5 0.5 L3.3 3.2 L0.5 6" stroke="#444" stroke-width="1.2" fill="none"/></svg>
<div style="position:absolute;left:380px;top:85px;width:258px;height:23px;border:1px solid #dfe1e5;border-radius:4px;box-sizing:border-box;background:#fff;"></div>
<svg style="position:absolute;left:392px;top:90px;" width="13" height="13" viewBox="0 0 13 13"><rect x="1" y="2" width="11" height="10" rx="1.2" stroke="#555" stroke-width="1.2" fill="none"/><path d="M1 5 H12 M4 0.5 V3 M9 0.5 V3" stroke="#555" stroke-width="1.2" fill="none"/></svg>
<div class="t" style="left:411.80px;top:91.53px;font-size:10px;color:#222;letter-spacing:-0.189px;">Date range</div>
<svg style="position:absolute;left:624px;top:93px;" width="4" height="6.5" viewBox="0 0 4 6.5"><path d="M0.5 0.5 L3.3 3.2 L0.5 6" stroke="#444" stroke-width="1.2" fill="none"/></svg>
<div style="position:absolute;left:380px;top:113px;width:258px;height:23px;border:1px solid #dfe1e5;border-radius:4px;box-sizing:border-box;background:#fff;"></div>
<svg style="position:absolute;left:392px;top:118px;" width="13" height="13" viewBox="0 0 13 13"><path d="M1 5 L7 2 L12 4 L12 8 L6 11 L1 9 Z M1 5 L6 7 L12 4 M6 7 V11 M4 3.5 L9.5 6" stroke="#555" stroke-width="1.2" fill="none"/></svg>
<div class="t" style="left:411.80px;top:119.53px;font-size:10px;color:#222;letter-spacing:-0.037px;">Model</div>
<svg style="position:absolute;left:624px;top:121px;" width="4" height="6.5" viewBox="0 0 4 6.5"><path d="M0.5 0.5 L3.3 3.2 L0.5 6" stroke="#444" stroke-width="1.2" fill="none"/></svg>
<div style="position:absolute;left:380px;top:141px;width:258px;height:23px;border:1px solid #dfe1e5;border-radius:4px;box-sizing:border-box;background:#fff;"></div>
<svg style="position:absolute;left:392px;top:146px;" width="13" height="13" viewBox="0 0 13 13"><path d="M0.8 10.5 V2 H4.5 L6 3.5 H11 V5 M0.8 10.5 L3 5.5 H12.5 L10.5 10.5 Z" stroke="#555" stroke-width="1.2" fill="none"/></svg>
<div class="t" style="left:411.80px;top:147.53px;font-size:10px;color:#222;letter-spacing:-0.275px;">Suite</div>
<svg style="position:absolute;left:624px;top:149px;" width="4" height="6.5" viewBox="0 0 4 6.5"><path d="M0.5 0.5 L3.3 3.2 L0.5 6" stroke="#444" stroke-width="1.2" fill="none"/></svg>
<div style="position:absolute;left:380px;top:169px;width:258px;height:23px;border:1px solid #dfe1e5;border-radius:4px;box-sizing:border-box;background:#fff;"></div>
<svg style="position:absolute;left:392px;top:174px;" width="13" height="13" viewBox="0 0 13 13"><rect x="2" y="2" width="9" height="10.5" rx="1" stroke="#555" stroke-width="1.2" fill="none"/><rect x="4.5" y="0.8" width="4" height="2.4" rx="1" stroke="#555" stroke-width="1.2" fill="none"/><path d="M4.5 7.5 L6 9 L8.7 6" stroke="#555" stroke-width="1.2" fill="none"/></svg>
<div class="t" style="left:411.80px;top:175.53px;font-size:10px;color:#222;letter-spacing:-0.306px;">Test case</div>
<svg style="position:absolute;left:624px;top:177px;" width="4" height="6.5" viewBox="0 0 4 6.5"><path d="M0.5 0.5 L3.3 3.2 L0.5 6" stroke="#444" stroke-width="1.2" fill="none"/></svg>
<div style="position:absolute;left:380px;top:197px;width:258px;height:45px;border:1px solid #dfe1e5;border-radius:4px;box-sizing:border-box;background:#fff;"></div>
<div style="position:absolute;left:381px;top:219px;width:256px;height:1px;background:#e3e5e9"></div>
<svg style="position:absolute;left:392px;top:202px;" width="13" height="13" viewBox="0 0 13 13"><path d="M3.2 12.2 L3.6 10.3 A5 5 0 1 1 5.6 10.9 Z" stroke="#555" stroke-width="1.2" fill="none" stroke-linejoin="round"/><circle cx="5.6" cy="6" r="1.9" stroke="#555" stroke-width="1.2" fill="none"/><path d="M5.6 2.6 V3.6 M5.6 8.4 V9.4 M2.2 6 H3.2 M8 6 H9 M3.2 3.6 L3.9 4.3 M8 3.6 L7.3 4.3 M3.2 8.4 L3.9 7.7 M8 8.4 L7.3 7.7" stroke="#555" stroke-width="0.7"/><path d="M11.2 1.2 A6.2 6.2 0 0 1 11.2 10.8" stroke="#555" stroke-width="1.2" fill="none"/></svg>
<div class="t" style="left:411.80px;top:203.84px;font-size:10px;color:#222;letter-spacing:-0.158px;">Feature</div>
<svg style="position:absolute;left:624px;top:205px;" width="4" height="6.5" viewBox="0 0 4 6.5"><path d="M0.5 0.5 L3.3 3.2 L0.5 6" stroke="#444" stroke-width="1.2" fill="none"/></svg>
<svg style="position:absolute;left:392px;top:224px;" width="13" height="13" viewBox="0 0 13 13"><path d="M4.2 12.8 L4.6 10.9 A5.5 5.5 0 1 1 6.6 11.6 Z" stroke="#555" stroke-width="1.2" fill="none" stroke-linejoin="round"/><path d="M6.6 3 V4.3 M6.6 7.7 V9 M3.6 6 H4.9 M8.3 6 H9.6 M4.5 3.9 L5.3 4.7 M8.7 3.9 L7.9 4.7 M4.5 8.1 L5.3 7.3 M8.7 8.1 L7.9 7.3" stroke="#555" stroke-width="0.9"/></svg>
<div class="t" style="left:411.80px;top:225.84px;font-size:10px;color:#222;letter-spacing:-0.279px;">Scenario</div>
<svg style="position:absolute;left:624px;top:227px;" width="4" height="6.5" viewBox="0 0 4 6.5"><path d="M0.5 0.5 L3.3 3.2 L0.5 6" stroke="#444" stroke-width="1.2" fill="none"/></svg>
<div style="position:absolute;left:380px;top:247px;width:258px;height:23px;border:1px solid #dfe1e5;border-radius:4px;box-sizing:border-box;background:#fff;"></div>
<svg style="position:absolute;left:392px;top:252px;" width="13" height="13" viewBox="0 0 13 13"><path d="M1 2 Q1 1 2 1 H6.5 L12 6.5 L6.5 12 L1 6.5 Z" stroke="#555" stroke-width="1.2" fill="none"/><path d="M4 3.5 V6 L5.5 7" stroke="#555" stroke-width="1.2" fill="none"/></svg>
<div class="t" style="left:411.80px;top:253.53px;font-size:10px;color:#222;letter-spacing:-0.217px;">Test case tag</div>
<svg style="position:absolute;left:624px;top:255px;" width="4" height="6.5" viewBox="0 0 4 6.5"><path d="M0.5 0.5 L3.3 3.2 L0.5 6" stroke="#444" stroke-width="1.2" fill="none"/></svg>
<div style="position:absolute;left:380px;top:275px;width:258px;height:45px;border:1px solid #dfe1e5;border-radius:4px;box-sizing:border-box;background:#fff;"></div>
<div style="position:absolute;left:381px;top:297px;width:256px;height:22px;background:#ebedf0;border-radius:0 0 3px 3px"></div>
<svg style="position:absolute;left:392px;top:280px;" width="13" height="13" viewBox="0 0 13 13"><circle cx="5.5" cy="6.5" r="4.8" stroke="#555" stroke-width="1.2" fill="none"/><path d="M5.5 1.7 V3 M5.5 10 V11.3 M0.7 6.5 H2 M9 6.5 H10.3 M11 2 A6.5 6.5 0 0 1 11 11" stroke="#555" stroke-width="1.2" fill="none"/></svg>
<div class="t" style="left:411.80px;top:281.84px;font-size:10px;color:#222;">Requirement group</div>
<svg style="position:absolute;left:624px;top:283px;" width="4" height="6.5" viewBox="0 0 4 6.5"><path d="M0.5 0.5 L3.3 3.2 L0.5 6" stroke="#444" stroke-width="1.2" fill="none"/></svg>
<svg style="position:absolute;left:392px;top:302px;" width="13" height="13" viewBox="0 0 13 13"><circle cx="6.5" cy="6.5" r="5.3" stroke="#555" stroke-width="1.2" fill="none"/><path d="M6.5 1.2 V3 M6.5 10 V11.8 M1.2 6.5 H3 M10 6.5 H11.8" stroke="#555" stroke-width="1.2" fill="none"/></svg>
<div class="t" style="left:410.70px;top:304.34px;font-size:10px;color:#8a8a8a;letter-spacing:-0.015px;">Requirement</div>
<svg style="position:absolute;left:624px;top:306px;" width="4" height="6.5" viewBox="0 0 4 6.5"><path d="M0.5 0.5 L3.3 3.2 L0.5 6" stroke="#bbb" stroke-width="1.2" fill="none"/></svg>
<div style="position:absolute;left:380px;top:326px;width:258px;height:22px;border:1px solid #a58ad9;border-radius:4px;box-sizing:border-box;background:#f8f5fd;box-shadow:0 0 0 1.5px #efe8fa"></div>
<svg style="position:absolute;left:392px;top:331px;" width="13" height="13" viewBox="0 0 13 13"><path d="M2 1 H8 L11 4 V12 H2 Z" stroke="#555" stroke-width="1.2" fill="none" stroke-linejoin="round"/><path d="M4.5 7.5 H8.5 M4.5 9.5 H8.5" stroke="#555" stroke-width="1"/></svg>
<div class="t" style="left:411.80px;top:332.54px;font-size:10px;color:#222;letter-spacing:-0.085px;">Only live runs</div>
<svg style="position:absolute;left:624px;top:334px;" width="4" height="6.5" viewBox="0 0 4 6.5"><path d="M0.5 0.5 L3.3 3.2 L0.5 6" stroke="#444" stroke-width="1.2" fill="none"/></svg>
<div style="position:absolute;left:380px;top:354px;width:258px;height:22px;border:1px solid #dfe1e5;border-radius:4px;box-sizing:border-box;background:#fff;"></div>
<svg style="position:absolute;left:392px;top:359px;" width="13" height="13" viewBox="0 0 13 13"><path d="M1 1.5 V6.5 L6.5 12 L12 6.5 L6.5 1 H1.5 Z" stroke="#555" stroke-width="1.2" fill="none" stroke-linejoin="round"/><circle cx="3.8" cy="3.8" r="0.7" fill="#555"/></svg>
<div class="t" style="left:411.80px;top:360.84px;font-size:10px;color:#222;">Test config tag</div>
<svg style="position:absolute;left:624px;top:362px;" width="4" height="6.5" viewBox="0 0 4 6.5"><path d="M0.5 0.5 L3.3 3.2 L0.5 6" stroke="#444" stroke-width="1.2" fill="none"/></svg>
<div style="position:absolute;left:380px;top:382px;width:258px;height:22px;border:1px solid #dfe1e5;border-radius:4px;box-sizing:border-box;background:#fff;"></div>
<svg style="position:absolute;left:392px;top:387px;" width="13" height="13" viewBox="0 0 13 13"><rect x="1.5" y="1" width="10" height="11" rx="1" stroke="#555" stroke-width="1.2" fill="none"/><path d="M1.5 6.5 H11.5 M9 3.5 H9.5 M9 9 H9.5" stroke="#555" stroke-width="1.2" fill="none"/></svg>
<div class="t" style="left:411.80px;top:388.84px;font-size:10px;color:#222;letter-spacing:0.037px;">Execution environment</div>
<svg style="position:absolute;left:624px;top:390px;" width="4" height="6.5" viewBox="0 0 4 6.5"><path d="M0.5 0.5 L3.3 3.2 L0.5 6" stroke="#444" stroke-width="1.2" fill="none"/></svg>
<div style="position:absolute;left:380px;top:410px;width:258px;height:22px;border:1px solid #dfe1e5;border-radius:4px;box-sizing:border-box;background:#fff;"></div>
<svg style="position:absolute;left:392px;top:415px;" width="13" height="13" viewBox="0 0 13 13"><rect x="1" y="1" width="11" height="8" rx="1" stroke="#555" stroke-width="1.2" fill="none"/><path d="M1 6.5 H12 M5 9 V11 M8 9 V11 M3.5 11.5 H9.5" stroke="#555" stroke-width="1.2" fill="none"/></svg>
<div class="t" style="left:411.80px;top:416.84px;font-size:10px;color:#222;letter-spacing:-0.700px;">SUT</div>
<svg style="position:absolute;left:624px;top:418px;" width="4" height="6.5" viewBox="0 0 4 6.5"><path d="M0.5 0.5 L3.3 3.2 L0.5 6" stroke="#444" stroke-width="1.2" fill="none"/></svg>
<div style="position:absolute;left:380px;top:438px;width:258px;height:22px;border:1px solid #dfe1e5;border-radius:4px;box-sizing:border-box;background:#fff;"></div>
<svg style="position:absolute;left:392px;top:443px;" width="13" height="13" viewBox="0 0 13 13"><path d="M6.5 0.8 L11.5 3.6 V9.4 L6.5 12.2 L1.5 9.4 V3.6 Z" stroke="#555" stroke-width="1.2" fill="none"/><circle cx="6.5" cy="6.5" r="1.3" fill="#555"/></svg>
<div class="t" style="left:411.80px;top:444.84px;font-size:10px;color:#222;letter-spacing:0.005px;">Test management tool</div>
<svg style="position:absolute;left:624px;top:446px;" width="4" height="6.5" viewBox="0 0 4 6.5"><path d="M0.5 0.5 L3.3 3.2 L0.5 6" stroke="#444" stroke-width="1.2" fill="none"/></svg>
<div style="position:absolute;left:369px;top:471px;width:280px;height:1px;background:#e3e5e9"></div>
<svg style="position:absolute;left:587px;top:485px;" width="7" height="7" viewBox="0 0 7 7"><path d="M0.3 0.3 L6.7 6.7 M6.7 0.3 L0.3 6.7" stroke="#555" stroke-width="0.9"/></svg>
<div class="t" style="left:601.70px;top:483.84px;font-size:10px;color:#222;letter-spacing:-0.350px;">Clear</div>
<div style="position:absolute;left:642px;top:130.8px;width:278.6px;height:309.4px;background:#fff;border:1px solid #d5d8dd;border-radius:5px;box-sizing:border-box;box-shadow:0 5px 14px rgba(0,0,0,0.16)"></div>
<div style="position:absolute;left:653.4px;top:138.3px;width:256.1px;height:21.0px;border:1.5px solid #7b55c0;border-radius:4px;box-sizing:border-box;background:#fff;box-shadow:0 0 0 2px #ede5f8"></div>
<svg style="position:absolute;left:666px;top:143px;" width="11" height="11" viewBox="0 0 11 11"><circle cx="4.5" cy="4.5" r="3.6" stroke="#666" stroke-width="1.5" fill="none"/><path d="M7.2 7.2 L10.5 10.5" stroke="#666" stroke-width="1.7" stroke-linecap="round"/></svg>
<div style="position:absolute;left:682.5px;top:142.5px;width:2.0px;height:13.0px;background:#111"></div>
<div class="t" style="left:685.00px;top:144.94px;font-size:10px;color:#a0a0a0;letter-spacing:-0.750px;">Search...</div>
<div class="t" style="left:654.90px;top:174.73px;font-size:10px;color:#222;letter-spacing:-0.138px;">Only live runs</div>
<svg style="position:absolute;left:885px;top:177px;" width="8.5" height="6.5" viewBox="0 0 8.5 6.5"><path d="M0.5 3 L3 5.7 L8 0.5" stroke="#7b55c0" stroke-width="1.1" fill="none"/></svg>
<div class="t" style="left:654.90px;top:198.53px;font-size:10px;color:#222;letter-spacing:-0.144px;">Only test configs</div>
<div style="position:absolute;left:643px;top:216px;width:256px;height:1px;background:#dfe1e5"></div>
<div class="t" style="left:654.40px;top:232.13px;font-size:10px;color:#222;font-weight:bold;-webkit-text-stroke:0;letter-spacing:-0.293px;">Available test configs</div>
<div class="t" style="left:665.40px;top:256.94px;font-size:10px;color:#222;letter-spacing:-0.507px;">adminSS1</div>
<div class="t" style="left:665.40px;top:281.14px;font-size:10px;color:#222;letter-spacing:-0.450px;">adminSS2</div>
<div class="t" style="left:665.40px;top:305.14px;font-size:10px;color:#222;letter-spacing:-0.450px;">adminSS3</div>
<div class="t" style="left:665.40px;top:329.14px;font-size:10px;color:#222;letter-spacing:-0.450px;">adminSS4</div>
<div class="t" style="left:665.40px;top:352.94px;font-size:10px;color:#222;letter-spacing:-0.319px;">BuggyFail</div>
<div class="t" style="left:665.40px;top:377.84px;font-size:10px;color:#222;letter-spacing:-0.500px;">BuggyPass</div>
<div style="position:absolute;left:899px;top:167px;width:21px;height:230.60000000000002px;background:#fafafa"></div>
<svg style="position:absolute;left:905px;top:176px;" width="10" height="8" viewBox="0 0 10 8"><path d="M5 0.5 L9.8 7.5 H0.2 Z" fill="#8a8a8a" stroke="#8a8a8a" stroke-width="0.8" stroke-linejoin="round"/></svg>
<div style="position:absolute;left:903.4px;top:191.7px;width:13.100000000000023px;height:23.200000000000017px;background:#8a8a8a;border-radius:6.5px"></div>
<svg style="position:absolute;left:905px;top:382px;" width="10" height="8" viewBox="0 0 10 8"><path d="M5 7.5 L9.8 0.5 H0.2 Z" fill="#8a8a8a" stroke="#8a8a8a" stroke-width="0.8" stroke-linejoin="round"/></svg>
<div style="position:absolute;left:643px;top:405px;width:277px;height:1px;background:#dfe1e5"></div>
<svg style="position:absolute;left:861px;top:421px;" width="7" height="7" viewBox="0 0 7 7"><path d="M0.3 0.3 L6.7 6.7 M6.7 0.3 L0.3 6.7" stroke="#555" stroke-width="0.9"/></svg>
<div class="t" style="left:875.80px;top:418.94px;font-size:10px;color:#222;letter-spacing:-0.525px;">Clear</div>
</body></html>
